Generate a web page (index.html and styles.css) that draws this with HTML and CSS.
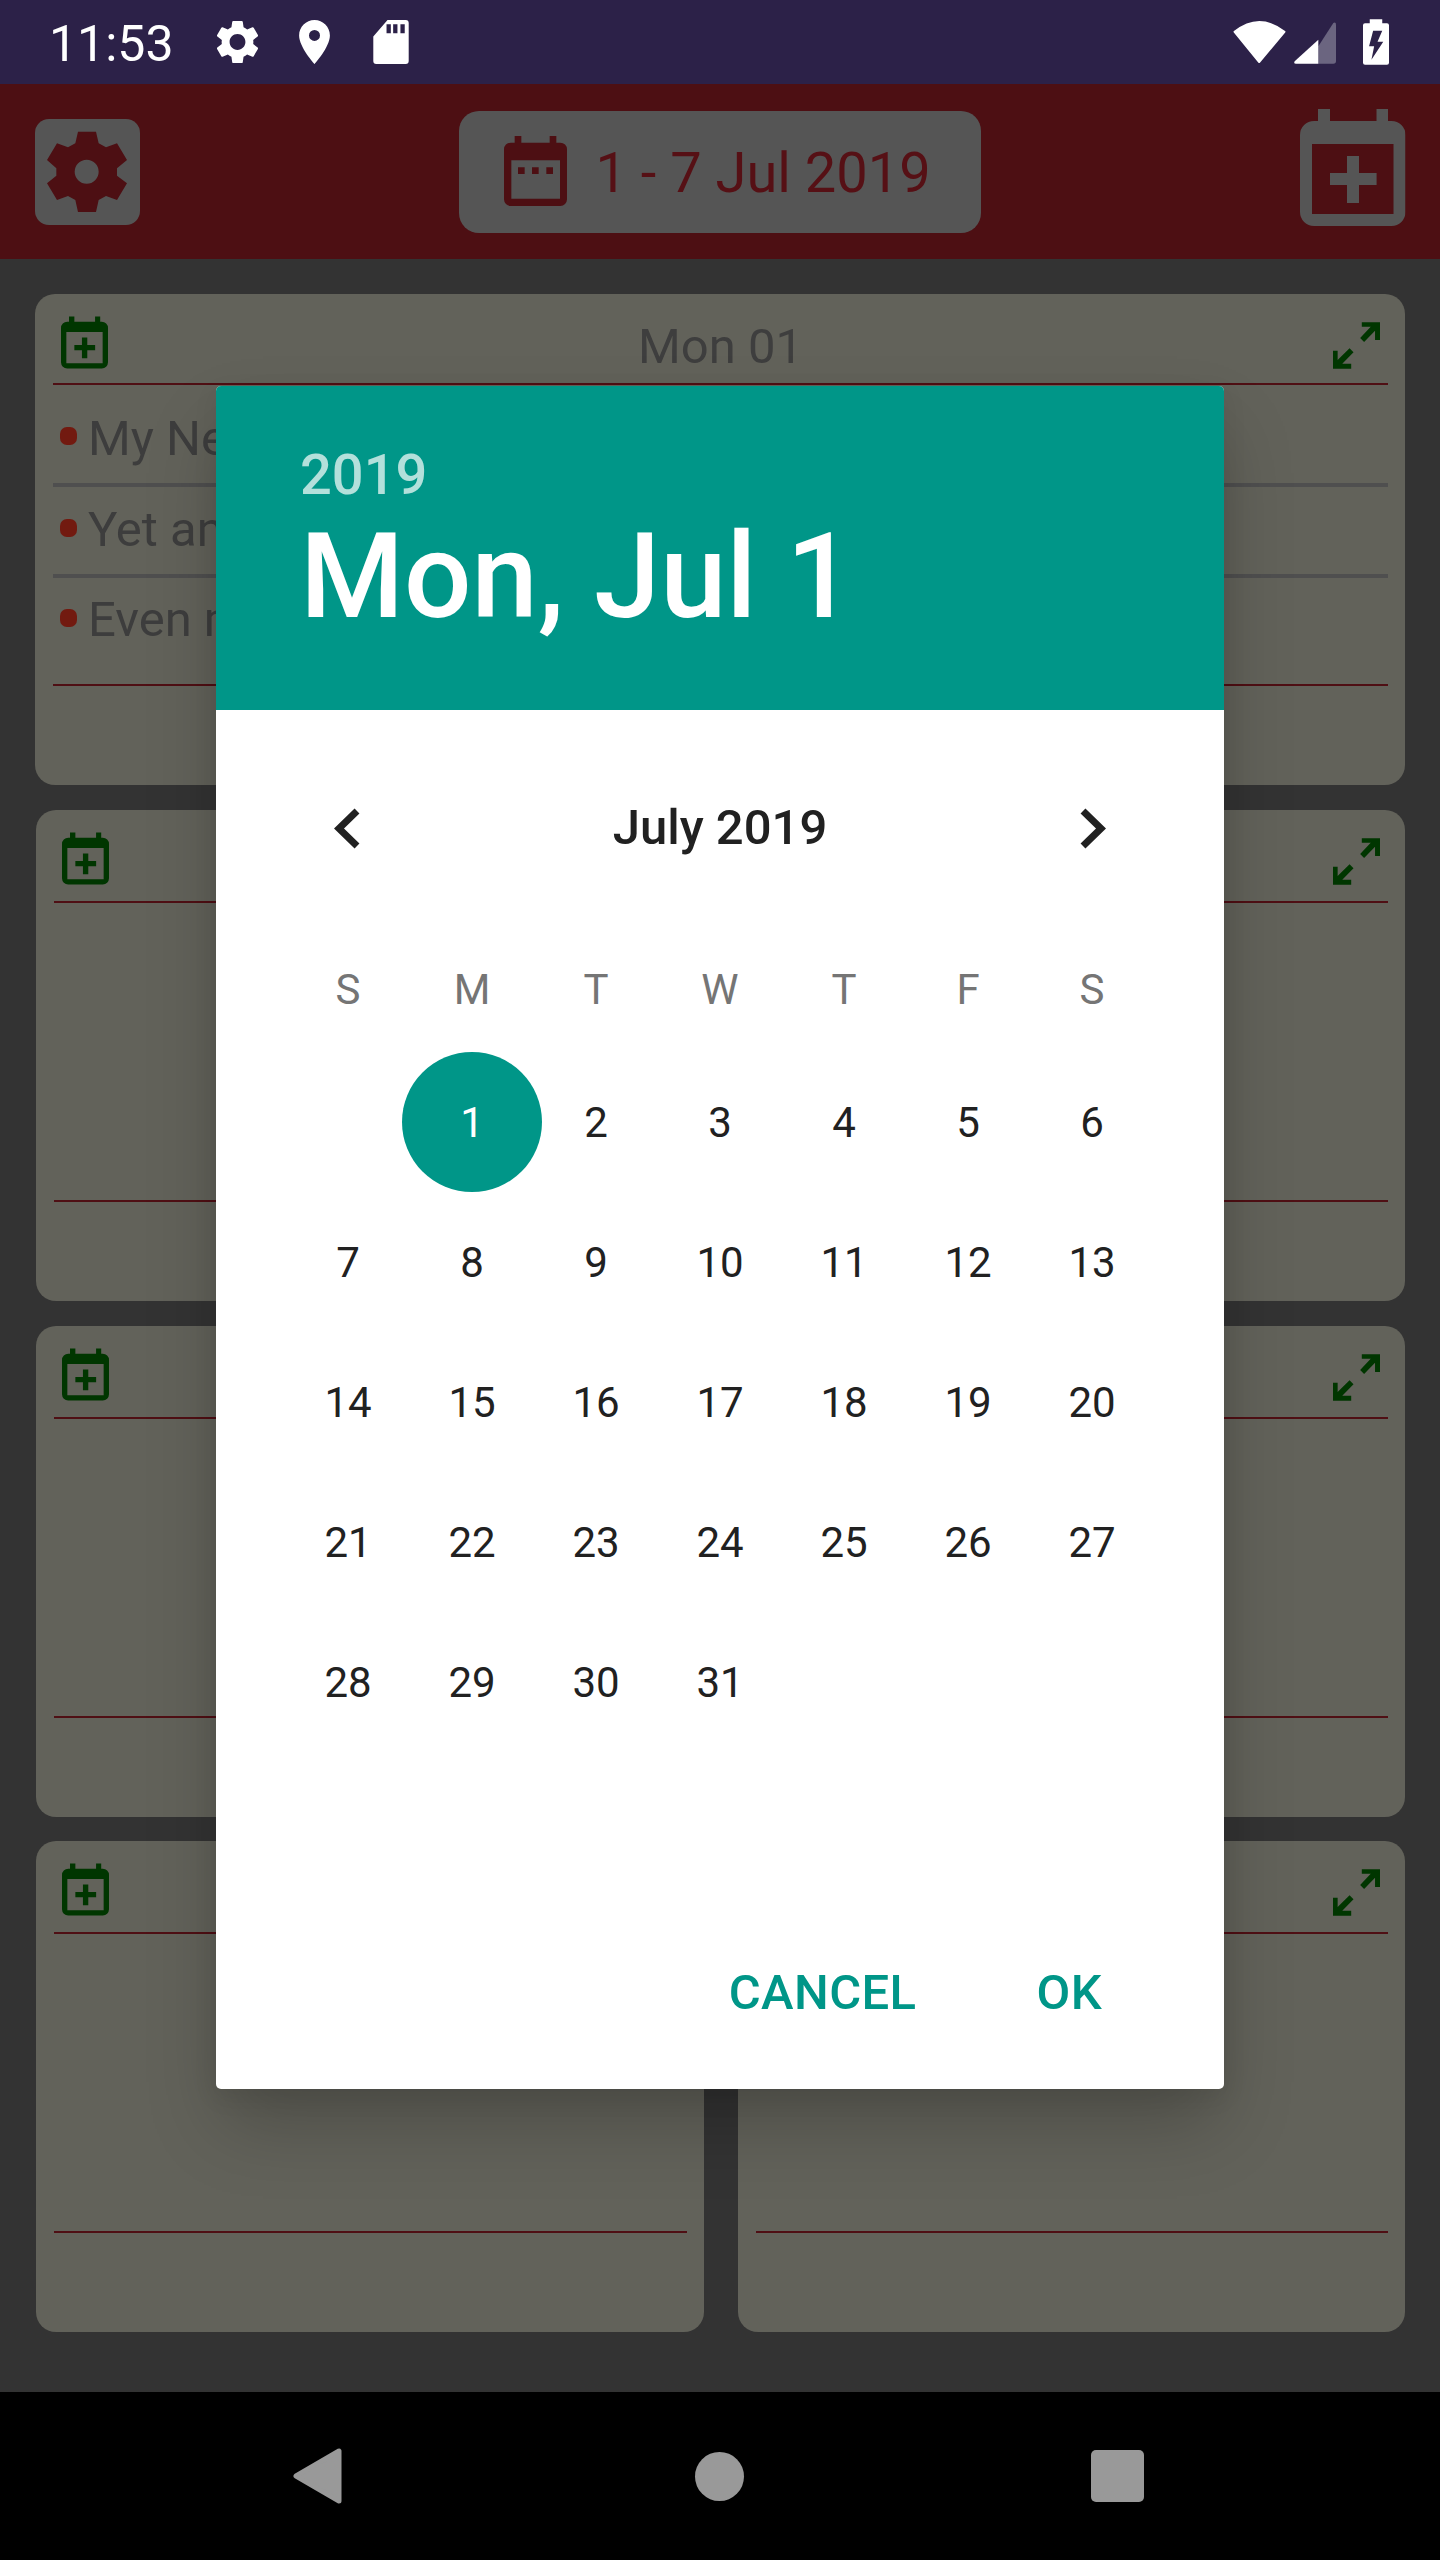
FILE: index.html
```html
<!DOCTYPE html>
<html lang="en">
<head>
<meta charset="utf-8">
<title>Week planner</title>
<link rel="stylesheet" href="styles.css">
</head>
<body>
<svg class="defs" width="0" height="0" aria-hidden="true">
  <symbol id="cal-add" viewBox="0 0 105.5 117">
    <path fill-rule="evenodd" d="M18 0h12v12h46.5V0H88v12h3.5a14 14 0 0 1 14 14v77a14 14 0 0 1-14 14H14a14 14 0 0 1-14-14V26a14 14 0 0 1 14-14h4zM12 35v70h81.5V35zM47 47h12v17h17.6v12H59v18H47V76H30V64h17z"/>
  </symbol>
  <symbol id="expand" viewBox="38 36 142 141">
    <path d="M125 36h55v54h-15V62l-33 34-12-12 32-34h-27zM38 122h14v28l36-35 12 12-34 35h27v15H38z"/>
  </symbol>
  <symbol id="gear-round" viewBox="2.6 2 18.8 20">
    <path fill-rule="evenodd" d="M19.14 12.94c.04-.3.06-.61.06-.94 0-.32-.02-.64-.07-.94l2.03-1.58c.18-.14.23-.41.12-.61l-1.92-3.32c-.12-.22-.37-.29-.59-.22l-2.39.96c-.5-.38-1.03-.7-1.62-.94l-.36-2.54c-.04-.24-.24-.41-.48-.41h-3.84c-.24 0-.43.17-.47.41l-.36 2.54c-.59.24-1.13.57-1.62.94l-2.39-.96c-.22-.08-.47 0-.59.22L2.74 8.87c-.12.21-.08.47.12.61l2.03 1.58c-.05.3-.09.63-.09.94s.02.64.07.94l-2.03 1.58c-.18.14-.23.41-.12.61l1.92 3.32c.12.22.37.29.59.22l2.39-.96c.5.38 1.03.7 1.62.94l.36 2.54c.05.24.24.41.48.41h3.84c.24 0 .44-.17.47-.41l.36-2.54c.59-.24 1.13-.56 1.62-.94l2.39.96c.22.08.47 0 .59-.22l1.92-3.32c.12-.22.07-.47-.12-.61l-2.01-1.58zM12 15.6c-1.98 0-3.6-1.62-3.6-3.6s1.62-3.6 3.6-3.6 3.6 1.62 3.6 3.6-1.62 3.6-3.6 3.6z"/>
  </symbol>
</svg>

<header class="status-bar">
  <span class="clock">11:53</span>
  <svg class="st-gear"><use href="#gear-round"/></svg>
  <svg class="st-pin" viewBox="5 2 14 20"><path fill-rule="evenodd" d="M12 2C8.13 2 5 5.13 5 9c0 5.25 7 13 7 13s7-7.75 7-13c0-3.87-3.13-7-7-7zm0 9.5a2.5 2.5 0 0 1 0-5 2.5 2.5 0 0 1 0 5z"/></svg>
  <svg class="st-sd" viewBox="505 30 107 133"><path fill-rule="evenodd" d="M548 30h55a9 9 0 0 1 9 9v115a9 9 0 0 1-9 9h-89a9 9 0 0 1-9-9V80zM545 43v27h13V43zM565 43v27h13V43zM587 43v27h13V43z"/></svg>
  <span class="status-spacer"></span>
  <svg class="st-wifi" viewBox="18 26 166 134"><path d="M100 154 25 62Q100 2 177 62Z" stroke="#fff" stroke-width="6" stroke-linejoin="round"/></svg>
  <svg class="st-signal" viewBox="207 36 126 124"><path class="sig-dim" d="M280 108 325 38q8-4 8 6v108q0 8-8 8h-45z"/><path d="M280 88V160H213q-8 0-4-7z"/></svg>
  <svg class="st-battery" viewBox="415 28 77 135"><path fill-rule="evenodd" d="M435 28h37v12h14q6 0 6 6v111q0 6-6 6h-65q-6 0-6-6V46q0-6 6-6h14zM445 62l-12 46h15l-8 40 35-53h-17l14-33z"/></svg>
</header>

<div class="app-bar">
  <button class="settings-btn" type="button" aria-label="Settings">
    <svg class="cog" viewBox="55 63 240 246"><path fill-rule="evenodd" stroke-linejoin="round" d="M148 65h54l8 35 22 12 33-12 30 50-30 25v22l30 23-30 50-33-12-22 12-8 36h-54l-8-36-22-12-33 12-30-50 28-23v-22l-28-25 30-50 33 12 22-12zM174 149a36 36 0 1 0 0 72 36 36 0 0 0 0-72z"/></svg>
  </button>
  <button class="date-btn" type="button">
    <svg class="date-icon" viewBox="28 30 189 210"><path fill-rule="evenodd" d="M60 30h20v20h85V30h20v20h12a20 20 0 0 1 20 20v150a20 20 0 0 1-20 20H48a20 20 0 0 1-20-20V70a20 20 0 0 1 20-20h12zM50 103v115h146V103zM70 124h20v20H70zM112 124h20v20h-20zM155 124h20v20h-20z"/></svg>
    <span>1 - 7 Jul 2019</span>
  </button>
  <button class="add-btn" type="button" aria-label="Add"><svg><use href="#cal-add"/></svg></button>
</div>

<main class="week">
  <section class="card">
    <div class="card-head">
      <svg class="ic-add"><use href="#cal-add"/></svg>
      <h2 class="card-title">Mon 01</h2>
      <svg class="ic-expand"><use href="#expand"/></svg>
    </div>
    <ul class="task-list">
      <li class="task"><i class="dot"></i>My New Task</li>
      <li class="task"><i class="dot"></i>Yet another task</li>
      <li class="task"><i class="dot"></i>Even more tasks</li>
    </ul>
    <div class="card-foot"></div>
  </section>

  <div class="week-row">
    <section class="card tall"><div class="card-head"><svg class="ic-add"><use href="#cal-add"/></svg><h2 class="card-title"></h2><svg class="ic-expand"><use href="#expand"/></svg></div><div class="task-list"></div><div class="card-foot"></div></section>
    <section class="card tall"><div class="card-head"><svg class="ic-add"><use href="#cal-add"/></svg><h2 class="card-title"></h2><svg class="ic-expand"><use href="#expand"/></svg></div><div class="task-list"></div><div class="card-foot"></div></section>
  </div>
  <div class="week-row">
    <section class="card tall"><div class="card-head"><svg class="ic-add"><use href="#cal-add"/></svg><h2 class="card-title"></h2><svg class="ic-expand"><use href="#expand"/></svg></div><div class="task-list"></div><div class="card-foot"></div></section>
    <section class="card tall"><div class="card-head"><svg class="ic-add"><use href="#cal-add"/></svg><h2 class="card-title"></h2><svg class="ic-expand"><use href="#expand"/></svg></div><div class="task-list"></div><div class="card-foot"></div></section>
  </div>
  <div class="week-row">
    <section class="card tall"><div class="card-head"><svg class="ic-add"><use href="#cal-add"/></svg><h2 class="card-title"></h2><svg class="ic-expand"><use href="#expand"/></svg></div><div class="task-list"></div><div class="card-foot"></div></section>
    <section class="card tall"><div class="card-head"><svg class="ic-add"><use href="#cal-add"/></svg><h2 class="card-title"></h2><svg class="ic-expand"><use href="#expand"/></svg></div><div class="task-list"></div><div class="card-foot"></div></section>
  </div>
</main>

<nav class="nav-bar">
  <svg class="nav-back" viewBox="0 0 49 56"><path d="M3 28 46 3V53Z" stroke-width="5" stroke-linejoin="round"/></svg>
  <span class="nav-home"></span>
  <span class="nav-recent"></span>
</nav>

<div class="dialog" role="dialog">
  <div class="dialog-head">
    <div class="dlg-year">2019</div>
    <div class="dlg-date">Mon, Jul 1</div>
  </div>
  <div class="month-row">
    <svg class="chev" viewBox="0 0 26 41"><path d="M23 3 5 20.5 23 38"/></svg>
    <span class="month-name">July 2019</span>
    <svg class="chev" viewBox="0 0 26 41"><path d="M3 3 21 20.5 3 38"/></svg>
  </div>
  <div class="weekdays"><span>S</span><span>M</span><span>T</span><span>W</span><span>T</span><span>F</span><span>S</span></div>
  <div class="days">
    <span></span><span><b class="selected">1</b></span><span>2</span><span>3</span><span>4</span><span>5</span><span>6</span>
    <span>7</span><span>8</span><span>9</span><span>10</span><span>11</span><span>12</span><span>13</span>
    <span>14</span><span>15</span><span>16</span><span>17</span><span>18</span><span>19</span><span>20</span>
    <span>21</span><span>22</span><span>23</span><span>24</span><span>25</span><span>26</span><span>27</span>
    <span>28</span><span>29</span><span>30</span><span>31</span>
  </div>
  <div class="actions"><span>CANCEL</span><span>OK</span></div>
</div>
</body>
</html>
```
FILE: styles.css
```css
* { box-sizing: border-box; }
html, body { margin: 0; padding: 0; }
body {
  position: relative;
  width: 1440px;
  height: 2560px;
  overflow: hidden;
  background: #333;
  font-family: Roboto, "Noto Sans", sans-serif;
  display: flex;
  flex-direction: column;
}
.defs { position: absolute; }
svg { display: block; flex: none; fill: currentColor; }

/* status bar */
.status-bar {
  height: 84px;
  flex: none;
  background: #2c2148;
  color: #fff;
  display: flex;
  align-items: flex-start;
  padding: 20px 51px 0 49px;
}
.clock { width: 167px; font-size: 50px; line-height: 50px; margin-top: -1px; }
.st-gear { width: 43px; height: 44px; }
.st-pin { width: 33px; height: 44px; margin-left: 39px; }
.st-sd { width: 36px; height: 44px; margin-left: 42px; }
.status-spacer { flex: 1; }
.st-wifi { width: 55px; height: 44px; }
.st-signal { width: 42px; height: 42px; margin: 2px 0 0 7px; }
.sig-dim { fill: #6b6580; }
.st-battery { width: 26px; height: 46px; margin: -1px 0 0 27px; }

/* app bar */
.app-bar {
  height: 175px;
  flex: none;
  background: #4d0f13;
  display: flex;
  justify-content: space-between;
  padding: 0 34.5px;
}
.settings-btn, .date-btn, .add-btn { border: 0; padding: 0; font: inherit; }
.settings-btn {
  width: 105.5px;
  height: 106px;
  margin-top: 35px;
  border-radius: 14px;
  background: #555;
  color: #4d0f13;
  display: flex;
  align-items: center;
  justify-content: center;
}
.cog { width: 80px; height: 82px; }
.date-btn {
  width: 522px;
  height: 122px;
  margin-top: 27px;
  border-radius: 20px;
  background: #555;
  color: #561015;
  display: flex;
  align-items: center;
  gap: 28.5px;
  padding-left: 45px;
}
.date-btn span { font-size: 56px; position: relative; top: 1px; }
.date-icon { width: 63px; height: 70px; margin-top: -2px; color: #4d0f13; }
.add-btn {
  width: 105.5px;
  height: 117px;
  margin-top: 25px;
  background: none;
  color: #555;
}
.add-btn svg { width: 105.5px; height: 117px; }

/* week grid */
.week {
  flex: 1;
  display: flex;
  flex-direction: column;
  gap: 24.75px;
  padding: 35px 35px 0;
}
.week-row {
  display: grid;
  grid-template-columns: 668px 667px;
  gap: 34px;
  margin-left: 1px;
}
.card {
  height: 491px;
  border-radius: 20px;
  background: #62625a;
  padding: 0 17px 0 18px;
  display: flex;
  flex-direction: column;
}
.card-head {
  height: 91px;
  flex: none;
  border-bottom: 2px solid #4f0f14;
  display: flex;
  align-items: flex-start;
  padding: 22px 8px 0;
  color: #003600;
}
.tall .card-head { height: 93px; }
.ic-add { width: 47px; height: 53px; }
.ic-expand { width: 47px; height: 47px; margin-top: 6px; }
.card-title {
  flex: 1;
  margin: 9px 0 0;
  text-align: center;
  font-size: 49px;
  line-height: 44px;
  font-weight: 400;
  color: #3e3e3e;
}
.task-list { flex: 1; list-style: none; margin: 0; padding: 10px 0 0; }
.task {
  height: 91.5px;
  display: flex;
  align-items: center;
  gap: 11px;
  padding-left: 7px;
  padding-bottom: 1px;
  font-size: 49px;
  color: #3d3d3d;
  border-bottom: 4px solid #4f4f4f;
}
.task:last-child { border-bottom-color: transparent; padding-bottom: 4px; }
.dot {
  width: 17px;
  height: 18px;
  margin-top: -4px;
  border-radius: 7px;
  background: #721a10;
  flex: none;
}
.card-foot { height: 101px; flex: none; border-top: 2px solid #4f0f14; }

/* navigation bar */
.nav-bar {
  height: 168px;
  flex: none;
  background: #000;
  display: flex;
  align-items: center;
  padding: 0 0 0 293px;
  color: #999;
}
.nav-back { width: 49px; height: 56px; }
.nav-back path { stroke: #999; }
.nav-home {
  width: 49px;
  height: 49px;
  margin: 0 347px 0 353px;
  border-radius: 50%;
  background: #999;
}
.nav-recent {
  width: 53px;
  height: 52px;
  border-radius: 5px;
  background: #999;
}

/* date picker dialog */
.dialog {
  position: absolute;
  left: 216px;
  top: 386px;
  width: 1008px;
  height: 1703px;
  border-radius: 5px;
  background: #fff;
  box-shadow: 0 40px 70px -6px rgba(0, 0, 0, .22), 0 8px 24px rgba(0, 0, 0, .08);
  display: flex;
  flex-direction: column;
}
.dialog-head {
  height: 324px;
  flex: none;
  background: #009688;
  border-radius: 5px 5px 0 0;
  padding: 59px 0 0 84px;
  color: #fff;
}
.dlg-year { font-size: 56px; line-height: 60px; font-weight: 500; color: #b3e0db; }
.dlg-date { font-size: 119px; line-height: 130px; font-weight: 500; margin-top: 7px; }
.month-row {
  flex: none;
  height: 60px;
  margin-top: 88px;
  padding: 0 118px;
  display: flex;
  align-items: center;
  justify-content: space-between;
  color: #212121;
}
.month-name { font-size: 49px; font-weight: 500; line-height: 60px; }
.chev { width: 26px; height: 41px; fill: none; }
.chev path { stroke: #212121; stroke-width: 7; fill: none; }
.weekdays, .days {
  display: grid;
  grid-template-columns: repeat(7, 124px);
  padding-left: 70px;
  flex: none;
  text-align: center;
  font-size: 42px;
}
.weekdays { margin-top: 112px; line-height: 40px; color: #757575; }
.days { margin-top: 42px; grid-auto-rows: 140px; color: #212121; }
.days span { display: flex; align-items: center; justify-content: center; }
.selected {
  width: 140px;
  height: 140px;
  flex: none;
  border-radius: 50%;
  background: #009688;
  color: #fff;
  font-weight: 400;
  display: flex;
  align-items: center;
  justify-content: center;
}
.actions {
  margin-top: auto;
  padding: 0 122px 66px 0;
  display: flex;
  justify-content: flex-end;
  gap: 120px;
  font-size: 49px;
  line-height: 60px;
  font-weight: 500;
  letter-spacing: .4px;
  color: #009688;
}
```
